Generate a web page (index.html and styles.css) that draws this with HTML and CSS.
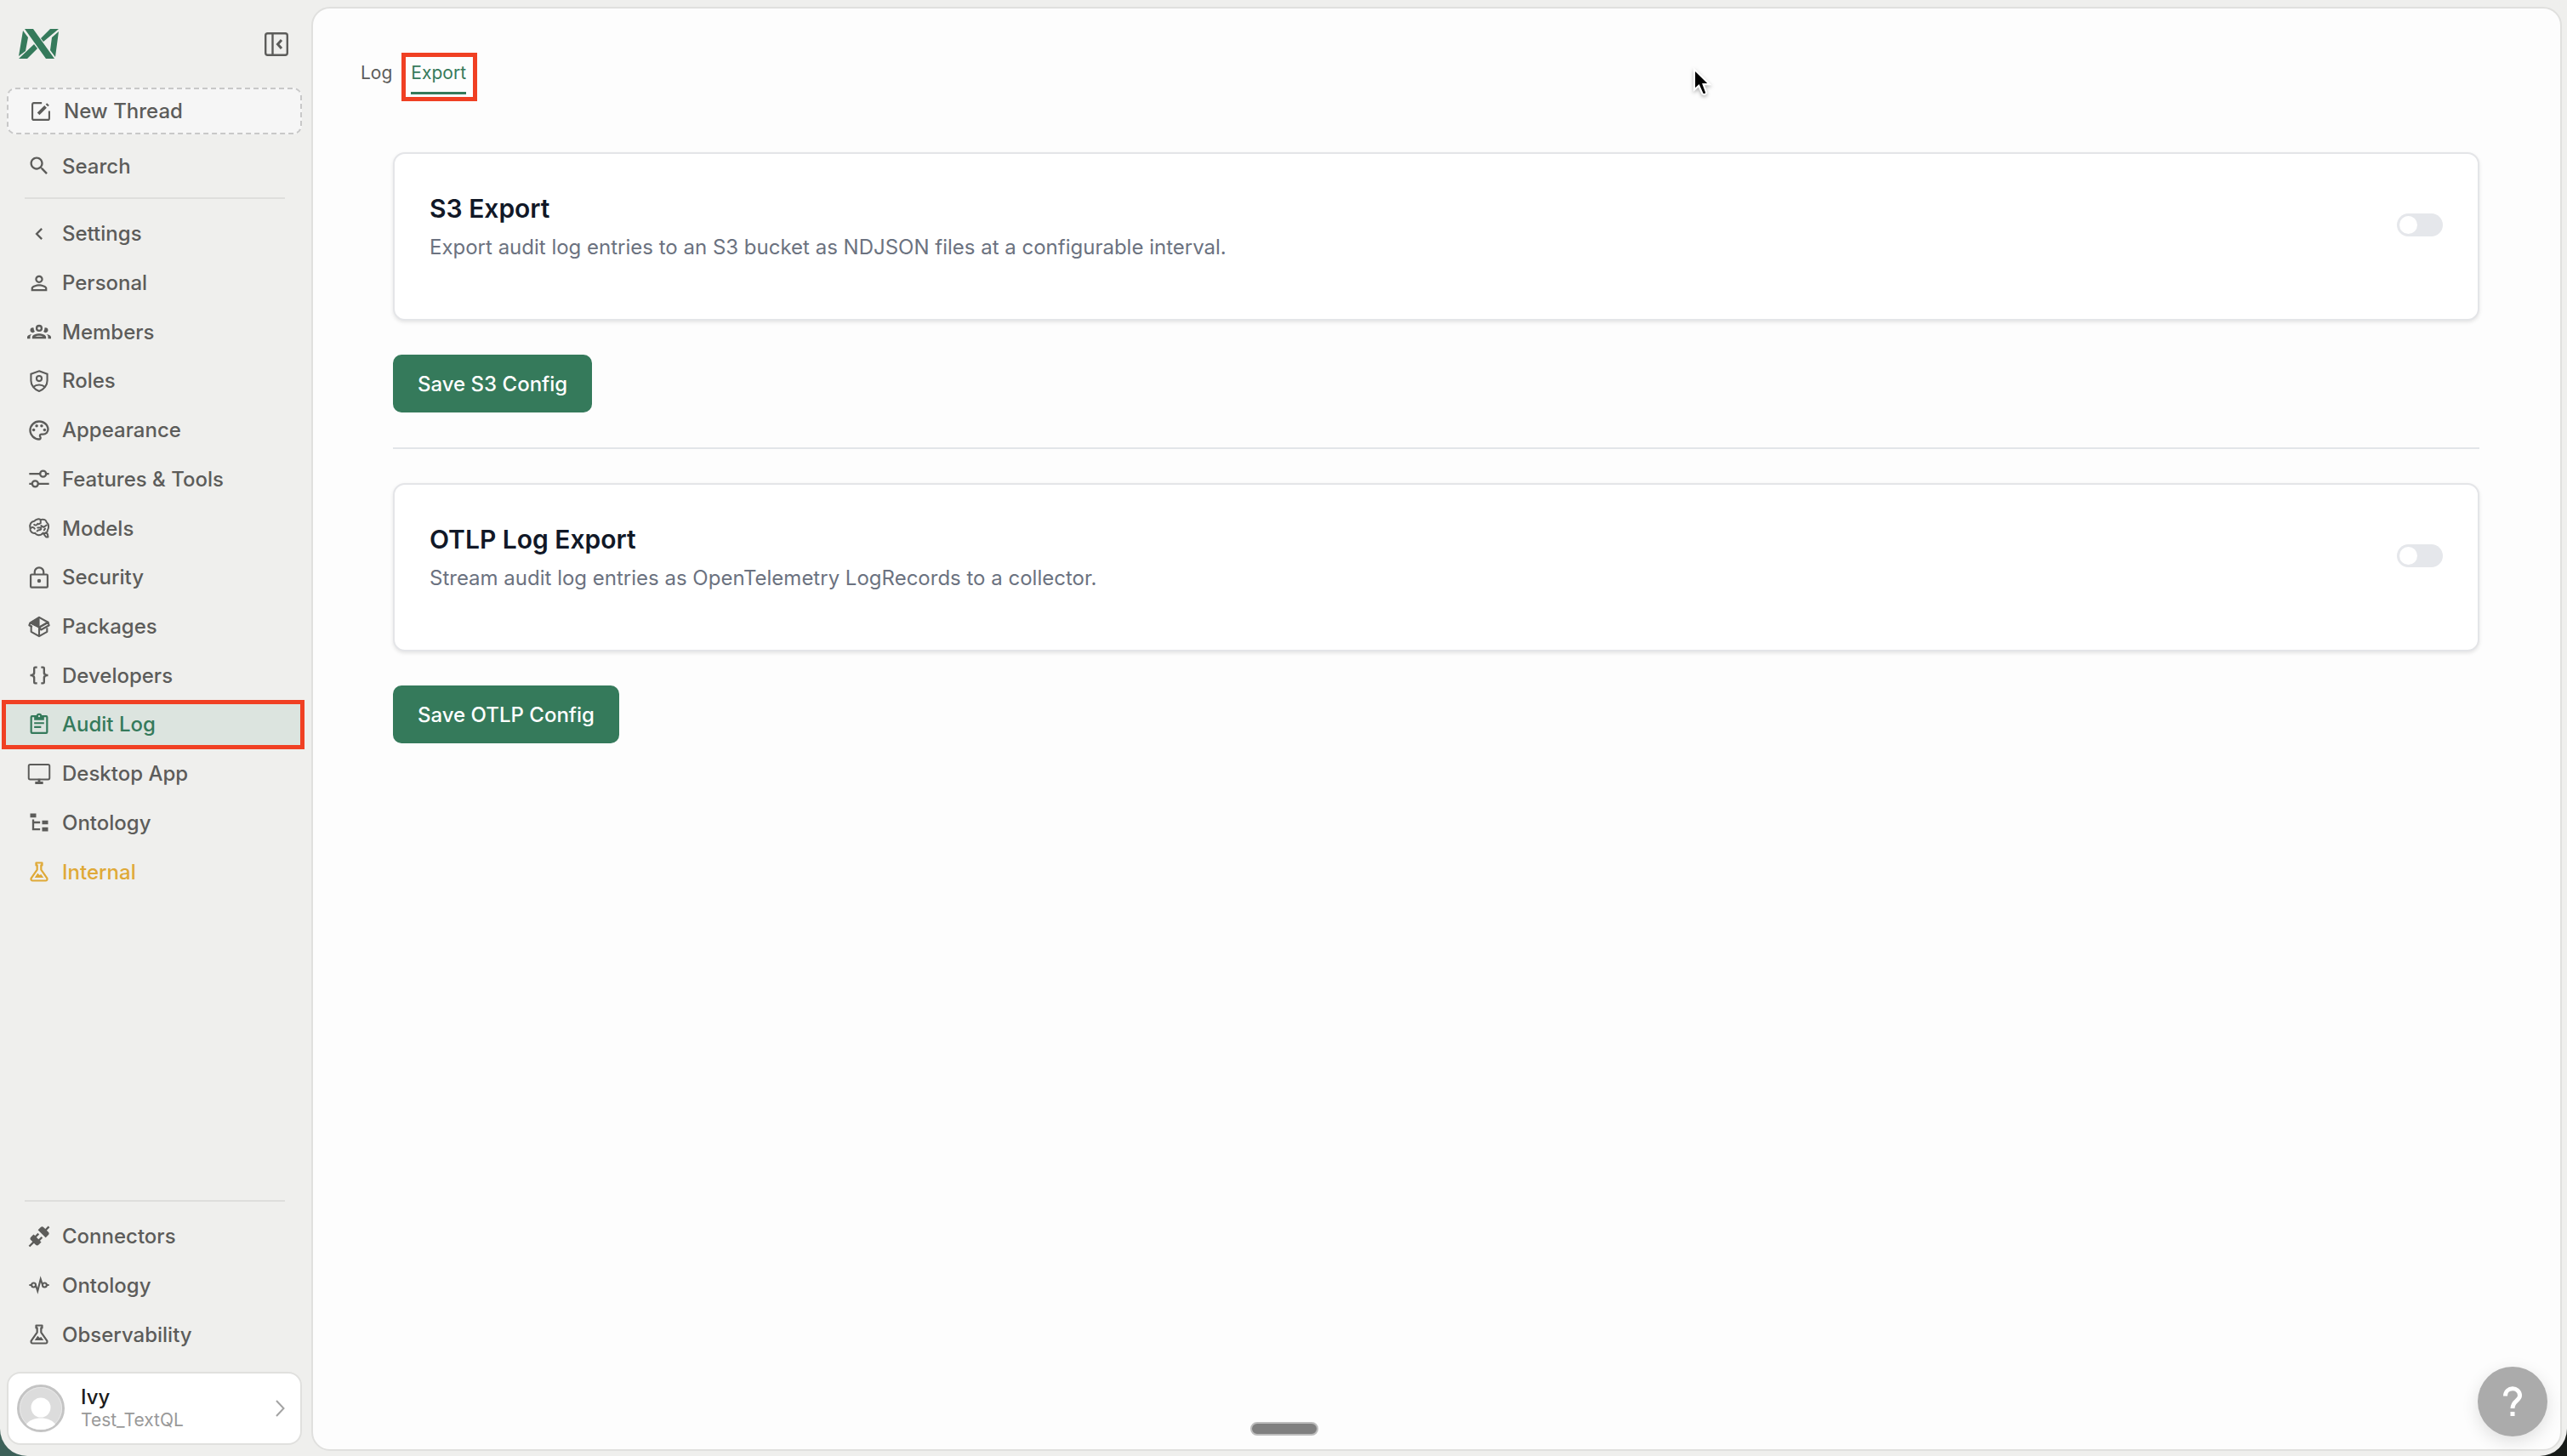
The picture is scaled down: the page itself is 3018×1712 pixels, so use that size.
FILE: index.html
```html
<!DOCTYPE html>
<html lang="en">
  <head>
    <meta charset="utf-8">
    <title>Audit Log</title>
    <link rel="stylesheet" href="styles.css">
  </head>
  <body>
    <div class="window">
      <aside class="sidebar">
        <div class="brand">
          <svg class="logo" viewBox="0 0 48 35">
            <path fill="#357a5b" d="M7 0H17L42 35H32ZM37 0H47L29 15L26 11ZM0 35H10L22 23L18 18ZM5 2L11 10L8 26L0 32ZM47 3L43 33L37 25L39 10Z"/>
          </svg>
          <button class="collapse" aria-label="Collapse sidebar">
            <svg viewBox="0 0 28 28" fill="none" stroke="currentColor" stroke-width="2.400"><rect x="1.200" y="1.200" width="25.600" height="25.600" rx="2.500"/><path d="M9.500 1V27"/><path d="M20 9L15.500 14L20 19" stroke-width="3"/></svg>
          </button>
        </div>

        <button class="new-thread">
          <svg class="icon" viewBox="0 0 24 24" fill="none" stroke="currentColor" stroke-width="1.800"><path d="M13 3.500H5Q3.500 3.500 3.500 5V19Q3.500 20.500 5 20.500H19Q20.500 20.500 20.500 19V11.500"/><path d="M9.500 14.500L16.800 7.200M18 6L19.300 4.700" stroke-width="3.200"/></svg>
          New Thread
        </button>
        <a class="item search" href="#">
          <svg class="icon" viewBox="0 0 24 24"><path d="M15.5 14h-.79l-.28-.27C15.41 12.590 16 11.110 16 9.500 16 5.910 13.090 3 9.500 3S3 5.910 3 9.500 5.910 16 9.500 16c1.610 0 3.090-.59 4.230-1.570l.27.28v.79l5 4.990L20.490 19l-4.990-5zm-6 0C7.010 14 5 11.990 5 9.500S7.010 5 9.500 5 14 7.010 14 9.500 11.990 14 9.500 14z"/></svg>
          Search
        </a>
        <hr class="divider">

        <nav class="settings" aria-label="Settings">
          <a class="item" href="#">
            <svg class="icon" viewBox="0 0 24 24" fill="none" stroke="currentColor" stroke-width="2"><path d="M14.700 6.700L9.500 12L14.700 17.300"/></svg>
            Settings
          </a>
          <a class="item" href="#">
            <svg class="icon" viewBox="0 0 24 24"><path d="M12 5.9c1.16 0 2.1.94 2.1 2.1s-.94 2.1-2.1 2.1S9.900 9.160 9.900 8s.94-2.1 2.1-2.1m0 9c2.970 0 6.100 1.460 6.100 2.100v1.100H5.900V17c0-.64 3.130-2.100 6.100-2.100M12 4C9.790 4 8 5.790 8 8s1.790 4 4 4 4-1.790 4-4-1.790-4-4-4zm0 9c-2.670 0-8 1.340-8 4v3h16v-3c0-2.660-5.330-4-8-4z"/></svg>
            Personal
          </a>
          <a class="item" href="#">
            <svg class="icon" viewBox="0 0 24 24"><path d="M12,5A3.5,3.5 0 0,0 8.5,8.5A3.5,3.5 0 0,0 12,12A3.5,3.5 0 0,0 15.5,8.5A3.5,3.5 0 0,0 12,5M12,7A1.5,1.5 0 0,1 13.5,8.5A1.5,1.5 0 0,1 12,10A1.5,1.5 0 0,1 10.5,8.5A1.5,1.5 0 0,1 12,7M5.5,8A2.5,2.5 0 0,0 3,10.5C3,11.44 3.53,12.25 4.29,12.68C4.65,12.88 5.06,13 5.5,13C5.94,13 6.35,12.88 6.71,12.68C7.08,12.47 7.39,12.17 7.62,11.81C6.89,10.86 6.5,9.7 6.5,8.5V8.22C6.2,8.08 5.86,8 5.5,8M18.5,8C18.14,8 17.8,8.08 17.5,8.22V8.5C17.5,9.7 17.11,10.86 16.38,11.81C16.63,12.15 16.94,12.45 17.29,12.68C17.65,12.88 18.06,13 18.5,13C18.94,13 19.35,12.88 19.71,12.68C20.47,12.25 21,11.44 21,10.5A2.5,2.5 0 0,0 18.5,8M12,14C9.66,14 5,15.17 5,17.5V19H19V17.5C19,15.17 14.34,14 12,14M4.71,14.55C2.78,14.78 0,15.76 0,17.5V19H3V17.07C3,16.06 3.69,15.22 4.71,14.55M19.29,14.55C20.31,15.22 21,16.06 21,17.07V19H24V17.5C24,15.76 21.22,14.78 19.29,14.55M12,16C13.53,16 15.24,16.5 16.23,17H7.77C8.76,16.5 10.47,16 12,16Z"/></svg>
            Members
          </a>
          <a class="item" href="#">
            <svg class="icon" viewBox="0 0 24 24" fill="none" stroke="currentColor" stroke-width="1.800"><path d="M12 2L20.200 5V11.500C20.200 16.500 16.800 20.700 12 22.200C7.200 20.700 3.800 16.500 3.800 11.500V5Z"/><circle cx="12" cy="9.500" r="2.600"/><path d="M6.500 17.800C9 15.200 15 15.200 17.500 17.800"/></svg>
            Roles
          </a>
          <a class="item" href="#">
            <svg class="icon" viewBox="0 0 24 24"><path d="M12,22A10,10 0 0,1 2,12A10,10 0 0,1 12,2C17.5,2 22,6 22,11A6,6 0 0,1 16,17H14.2C13.9,17 13.7,17.2 13.7,17.5C13.7,17.6 13.8,17.7 13.8,17.8C14.2,18.3 14.4,18.9 14.4,19.5C14.5,20.9 13.4,22 12,22M12,4A8,8 0 0,0 4,12A8,8 0 0,0 12,20C12.3,20 12.5,19.8 12.5,19.5C12.5,19.3 12.4,19.2 12.4,19.1C12,18.6 11.8,18.1 11.8,17.5C11.8,16.1 12.9,15 14.3,15H16A4,4 0 0,0 20,11C20,7.1 16.4,4 12,4Z"/><circle cx="6.500" cy="11.500" r="1.500"/><circle cx="9.500" cy="7.500" r="1.500"/><circle cx="14.500" cy="7.500" r="1.500"/><circle cx="17.500" cy="11.500" r="1.500"/></svg>
            Appearance
          </a>
          <a class="item" href="#">
            <svg class="icon" viewBox="0 0 24 24" fill="none" stroke="currentColor" stroke-width="2"><path d="M2 7H13M19 7H22M2 17H5M11 17H22"/><circle cx="16" cy="7" r="3"/><circle cx="8" cy="17" r="3"/></svg>
            Features &amp; Tools
          </a>
          <a class="item" href="#">
            <svg class="icon" viewBox="0 0 24 24" fill="none" stroke="currentColor" stroke-width="1.700" stroke-linecap="round" stroke-linejoin="round"><path d="M8 17C5 17.500 2.500 15 3 12C2 8 4 5.500 7 5C9 2.500 12 2.500 13.500 3.500C17 2.500 19 4 19.500 6C22 8 22 12 20.500 14C20.500 17 18 17.500 16 17L14 18.500C12 19.500 9 19 8 17Z"/><path d="M16 17L19 21H21L20.500 18L18.500 16.500M3.500 12C5 10.500 6.500 11 7.500 12.500M7 8.500C8 9.500 10 9 10.500 7.500M13.500 4V7L11.500 8M10.500 11.500H14M14 9.500L16.500 11L19.500 9M10 15C11 13.500 13 14.500 14 13M17 14L18 12.500"/></svg>
            Models
          </a>
          <a class="item" href="#">
            <svg class="icon" viewBox="0 0 24 24" fill="none" stroke="currentColor" stroke-width="1.900"><rect x="3.500" y="9" width="17" height="13" rx="1"/><path d="M7.500 9V6.500A4.500 4.500 0 0 1 16.500 6.500V9"/><circle cx="12" cy="15.500" r="1.900" fill="currentColor" stroke="none"/></svg>
            Security
          </a>
          <a class="item" href="#">
            <svg class="icon" viewBox="0 0 24 24" fill="none" stroke="currentColor" stroke-width="1.800" stroke-linejoin="round"><path d="M4 11V17L12 21.500L20 17V13M12 13V21.500"/><path d="M12 2.500L21 7.500L12 12.500L3 8Z"/><path d="M12 2.500V12.500L3 8Z" fill="currentColor" stroke-width="1"/><path d="M3 8L2 10.500L5 12"/><path d="M12 12.500L21 7.500L22 10.500L14 15Z"/></svg>
            Packages
          </a>
          <a class="item" href="#">
            <svg class="icon" viewBox="0 0 24 24"><path d="M8,3A2,2 0 0,0 6,5V9A2,2 0 0,1 4,11H3V13H4A2,2 0 0,1 6,15V19A2,2 0 0,0 8,21H10V19H8V14A2,2 0 0,0 6,12A2,2 0 0,0 8,10V5H10V3M16,3A2,2 0 0,1 18,5V9A2,2 0 0,0 20,11H21V13H20A2,2 0 0,0 18,15V19A2,2 0 0,1 16,21H14V19H16V14A2,2 0 0,1 18,12A2,2 0 0,1 16,10V5H14V3H16Z"/></svg>
            Developers
          </a>
          <a class="item active" href="#" aria-current="page">
            <svg class="icon" viewBox="0 0 24 24" fill="none" stroke="currentColor" stroke-width="1.900"><rect x="4" y="3.500" width="16" height="17" rx="1"/><path d="M7 10.500H17M7 14.500H14"/><path d="M7 7.500V4H17V7.500Z" fill="currentColor" stroke="none"/><circle cx="12" cy="3.500" r="2.800" fill="currentColor" stroke="none"/><circle cx="12" cy="3.500" r="1" fill="#dce4df" stroke="none"/></svg>
            Audit Log
          </a>
          <a class="item" href="#">
            <svg class="icon" viewBox="0 0 24 24" fill="none" stroke="currentColor" stroke-width="1.700"><rect x="1.500" y="2.500" width="21" height="15" rx="1.500"/><path d="M12 17V21M8 21H16" stroke-width="2.400"/></svg>
            Desktop App
          </a>
          <a class="item" href="#">
            <svg class="icon" viewBox="0 0 24 24"><path d="M3,3H9V7H3V3M15,10H21V14H15V10M15,17H21V21H15V17M13,13H7V18H13V20H7L5,20V9H7V11H13V13Z"/></svg>
            Ontology
          </a>
          <a class="item internal" href="#">
            <svg class="icon" viewBox="0 0 24 24" fill="none" stroke="currentColor" stroke-width="1.900" stroke-linejoin="round"><path d="M9 3H15V5.500H14V10L20 18.500Q20.500 21 18.500 21H5.500Q3.500 21 4 18.500L10 10V5.500H9Z"/><path d="M7.500 18L10.500 13.500L12.500 15.500L14 14.500L16.500 18Z" fill="currentColor" stroke="none"/></svg>
            Internal
          </a>
        </nav>

        <div class="sidebar-foot">
          <hr class="divider">
          <nav class="shortcuts" aria-label="Workspace">
            <a class="item" href="#">
              <svg class="icon" viewBox="0 0 24 24"><path d="M21.4 7.5C22.2 8.3 22.2 9.6 21.4 10.3L18.6 13.1L10.8 5.3L13.6 2.5C14.4 1.7 15.7 1.7 16.4 2.5L18.2 4.3L21.2 1.3L22.6 2.7L19.6 5.7L21.4 7.5M15.6 13.3L14.2 11.9L11.4 14.7L9.3 12.6L12.1 9.8L10.7 8.4L7.9 11.2L6.4 9.8L3.6 12.6C2.8 13.4 2.8 14.7 3.6 15.4L5.4 17.2L1.4 21.2L2.8 22.6L6.8 18.6L8.6 20.4C9.4 21.2 10.7 21.2 11.4 20.4L14.2 17.6L12.8 16.2L15.6 13.3Z"/></svg>
              Connectors
            </a>
            <a class="item" href="#">
              <svg class="icon" viewBox="0 0 24 24" fill="none" stroke="currentColor" stroke-width="1.800"><path d="M2 12H4.500M8.500 12L10.500 18L13.500 6L15.500 12M19.500 12H22"/><circle cx="6.500" cy="12" r="2.100"/><circle cx="17.500" cy="12" r="2.100"/></svg>
              Ontology
            </a>
            <a class="item" href="#">
              <svg class="icon" viewBox="0 0 24 24" fill="none" stroke="currentColor" stroke-width="1.900" stroke-linejoin="round"><path d="M9 3H15V5.500H14V10L20 18.500Q20.500 21 18.500 21H5.500Q3.500 21 4 18.500L10 10V5.500H9Z"/><path d="M7.500 18L10.500 13.500L12.500 15.500L14 14.500L16.500 18Z" fill="currentColor" stroke="none"/></svg>
              Observability
            </a>
          </nav>
          <button class="account">
            <svg class="avatar" viewBox="0 0 56 56"><circle cx="28" cy="28" r="26.500" fill="#dcdcdc" stroke="#c4c4c4" stroke-width="3"/><circle cx="28" cy="28" r="24.500" fill="none" stroke="#e8e8e8"/><circle cx="28" cy="27" r="11.500" fill="#fff"/><path d="M11 47C16 37 40 37 45 47C36 55 20 55 11 47Z" fill="#fff"/></svg>
            <span class="who">
              <span class="name">Ivy</span>
              <span class="org">Test_TextQL</span>
            </span>
            <svg class="chevron" viewBox="0 0 12 20" fill="none" stroke="#a3a3a3" stroke-width="2"><path d="M2 1L10.500 10L2 19"/></svg>
          </button>
        </div>
      </aside>

      <main class="panel">
        <nav class="tabs" aria-label="Audit log">
          <a class="tab" href="#">Log</a>
          <a class="tab selected" href="#" aria-current="page">Export</a>
        </nav>

        <form class="content">
          <section class="card">
            <div>
              <h2><label for="s3">S3 Export</label></h2>
              <p>Export audit log entries to an S3 bucket as NDJSON files at a configurable interval.</p>
            </div>
            <input class="switch" type="checkbox" role="switch" id="s3">
          </section>
          <button class="save" type="button">Save S3 Config</button>
          <hr>
          <section class="card">
            <div>
              <h2><label for="otlp">OTLP Log Export</label></h2>
              <p>Stream audit log entries as OpenTelemetry LogRecords to a collector.</p>
            </div>
            <input class="switch" type="checkbox" role="switch" id="otlp">
          </section>
          <button class="save" type="button">Save OTLP Config</button>
        </form>
      </main>
    </div>

    <div class="grabber"></div>
    <button class="help" aria-label="Help">
      <svg viewBox="0 0 24 36" fill="none" stroke="#fff" stroke-width="5"><path d="M3.500 11.500C3.500 0 20.500 0 20.500 11C20.500 17 12 17 12 26"/><path d="M12 30V35"/></svg>
    </button>
    <svg class="cursor" viewBox="0 0 20 32"><path d="M1.500 1.500V24L6.500 19.500L10.500 28.500Q13 30.500 15 27.500L11.500 18H18.500Z" stroke="#fff" stroke-width="2"/></svg>
  </body>
</html>
```
FILE: styles.css
```css
* {
  box-sizing: border-box;
}
body {
  margin: 0;
  background: linear-gradient(90deg, #3d6159, #171b18);
  font-family: Inter, "Liberation Sans", sans-serif;
  font-size: 24px;
  color: #5c5c5a;
}
button {
  font: inherit;
  color: inherit;
}
a {
  color: inherit;
  text-decoration: none;
}
.window {
  display: flex;
  height: 100vh;
  padding: 8px 6px 6px 0;
  background: #efefed;
  border-radius: 0 0 32px 32px;
}

/* sidebar */
.sidebar {
  display: flex;
  flex-direction: column;
  flex: none;
  width: 366px;
  padding: 0 11px 7px 8px;
  font-weight: 500;
}
.brand {
  display: flex;
  justify-content: space-between;
  align-items: center;
  height: 87px;
  padding: 0 16px 0 14px;
  margin-bottom: 8px;
  flex: none;
}
.logo {
  width: 48px;
  height: 35px;
}
.collapse {
  display: flex;
  padding: 0;
  border: 0;
  background: none;
}
.collapse svg {
  width: 28px;
  height: 28px;
}
.icon {
  flex: none;
  width: 28px;
  height: 28px;
  fill: currentColor;
}
.icon[fill="none"] {
  fill: none;
}
.new-thread {
  display: flex;
  align-items: center;
  gap: 13px;
  height: 55px;
  flex: none;
  padding: 0 24px;
  background: #f6f6f6;
  border: 2px dashed #c8c8c8;
  border-radius: 10px;
}
.item {
  display: flex;
  align-items: center;
  gap: 13px;
  padding: 0 24px;
}
.search {
  height: 58px;
  flex: none;
  margin: 8px 0;
}
.divider {
  flex: none;
  height: 2px;
  margin: 0 20px 0 21px;
  border: 0;
  background: #dededc;
}
.settings {
  display: grid;
  grid-auto-rows: 1fr;
  height: 808px;
  margin-top: 12px;
  flex: none;
}
.active {
  margin: 0 -3px 0 -6px;
  padding: 0 25px;
  background: #dce4df;
  border: 5px solid #f04023;
  color: #357a5b;
}
.internal {
  color: #dfa937;
}
.sidebar-foot {
  margin-top: auto;
}
.shortcuts {
  display: grid;
  grid-auto-rows: 1fr;
  height: 173px;
  margin: 12px 0 15px;
}
.account {
  display: flex;
  align-items: center;
  width: 100%;
  height: 86px;
  padding: 0 18px 0 10px;
  background: #fff;
  border: 2px solid #e0e0de;
  border-radius: 16px;
  text-align: left;
}
.avatar {
  width: 56px;
  height: 56px;
}
.who {
  display: flex;
  flex-direction: column;
  flex: 1;
  margin-left: 19px;
}
.name {
  color: #1c1c1c;
  line-height: 28px;
}
.org {
  color: #999;
  font-size: 21px;
  font-weight: 400;
  line-height: 26px;
}
.chevron {
  width: 12px;
  height: 20px;
}

/* main panel */
.panel {
  flex: 1;
  padding: 52px 95px 0 94px;
  background: #fdfdfd;
  border: 2px solid #e0e0de;
  border-radius: 22px;
}
.tabs {
  display: flex;
  gap: 11px;
  height: 57px;
  margin-left: -38px;
  font-size: 21px;
}
.tab {
  padding: 11px 0 0;
  line-height: 26px;
}
.selected {
  height: 57px;
  padding: 6px 8px 0 6px;
  border: 5px solid #f04023;
  color: #357a5b;
}
.selected::after {
  content: "";
  display: block;
  height: 3px;
  margin-top: 9px;
  background: #357a5b;
}
.content {
  display: flex;
  flex-direction: column;
  align-items: flex-start;
  padding-top: 60px;
}
.card {
  display: flex;
  justify-content: space-between;
  align-items: flex-start;
  width: 100%;
  height: 198px;
  padding: 44px 41px 0;
  background: #fff;
  border: 2px solid #e4e5e8;
  border-radius: 14px;
  box-shadow: 0 2px 4px rgba(0, 0, 0, .1);
}
.card h2 {
  margin: 0;
  color: #111827;
  font-size: 30px;
  font-weight: 600;
  line-height: 40px;
}
.card p {
  margin: 8px 0 0;
  color: #6b7280;
  line-height: 36px;
}
.switch {
  appearance: none;
  width: 54px;
  height: 27px;
  margin: 26px 0 0;
  padding: 3px;
  border-radius: 14px;
  background: #e5e7eb;
}
.switch::before {
  content: "";
  display: block;
  width: 21px;
  height: 21px;
  border-radius: 50%;
  background: #fff;
}
.switch:checked {
  background: #357a5b;
}
.switch:checked::before {
  margin-left: auto;
}
.save {
  height: 68px;
  margin-top: 40px;
  padding: 0 29px;
  border: 0;
  border-radius: 10px;
  background: #357a5b;
  color: #fff;
  font-weight: 500;
}
.content hr {
  width: 100%;
  height: 2px;
  margin: 41px 0 40px;
  border: 0;
  background: #e2e5e9;
}

/* things floating over the page */
.grabber {
  position: absolute;
  left: 50%;
  bottom: 24px;
  width: 80px;
  height: 16px;
  margin-left: -39px;
  background: #808080;
  border: 2px solid #bdbdbd;
  border-radius: 8px;
}
.help {
  position: absolute;
  right: 23px;
  bottom: 23px;
  display: flex;
  align-items: center;
  justify-content: center;
  width: 82px;
  height: 82px;
  border: 0;
  border-radius: 50%;
  background: #ababab;
  box-shadow: 0 6px 20px rgba(0, 0, 0, .12);
}
.help svg {
  width: 24px;
  height: 36px;
}
.cursor {
  position: absolute;
  left: 1990px;
  top: 80px;
  width: 22px;
  height: 34px;
  overflow: visible;
  filter: drop-shadow(0 2px 2px rgba(0, 0, 0, .3));
}
```
